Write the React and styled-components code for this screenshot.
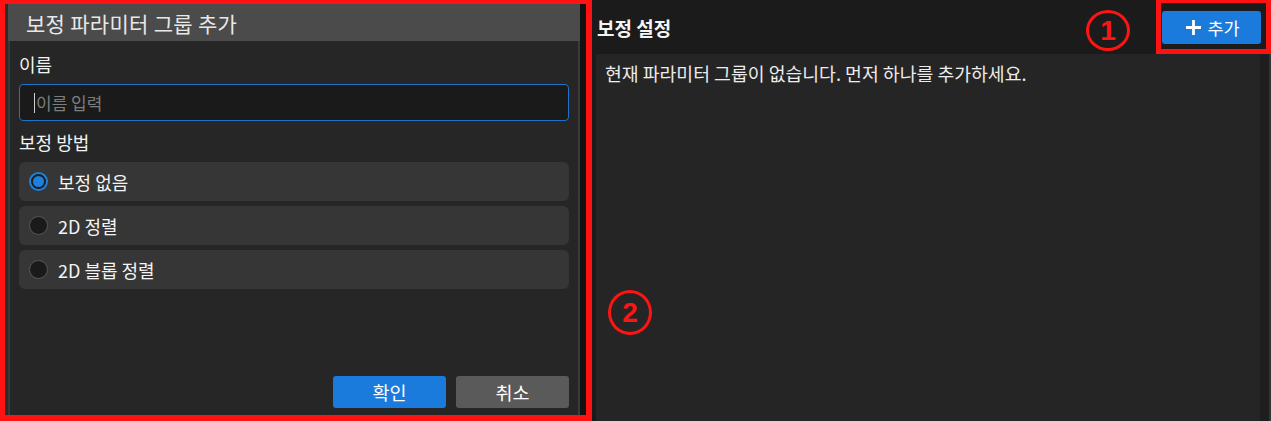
import React from "react";
import styled, { createGlobalStyle } from "styled-components";

const Global = createGlobalStyle`
  html, body { margin: 0; padding: 0; background: #1b1b1b; }
  body { font-family: "Noto Sans CJK KR", "Noto Sans", "Liberation Sans", sans-serif; }
  * { box-sizing: border-box; }
`;

const Page = styled.div`
  display: flex;
  width: 1271px;
  height: 421px;
  overflow: hidden;
`;

const LeftPane = styled.section`
  width: 592px;
  height: 421px;
  display: flex;
  border: 5px solid #ff1212;
  border-top-width: 4px;
  border-bottom-width: 6px;
  border-right-width: 6px;
  background: #121212;
`;

const Strip = styled.div`
  width: ${(p) => p.$w}px;
  flex: none;
  background: ${(p) => p.$c};
`;

const Dialog = styled.div`
  flex: 1;
  display: flex;
  flex-direction: column;
`;

const TitleBar = styled.div`
  height: 37px;
  flex: none;
  background: #4b4b4b;
  padding-left: 18px;
  display: flex;
  align-items: center;
  color: #e8e8e8;
  font-size: 21px;
  letter-spacing: 0.3px;
`;

const Body = styled.div`
  flex: 1;
  display: flex;
  flex-direction: column;
  background: #262626;
  border-left: 2px solid #3a3a3a;
  border-right: 2px solid #3a3a3a;
  padding: 0 9px 7px 9px;
`;

const Label = styled.div`
  margin-top: ${(p) => p.$mt}px;
  height: 20px;
  line-height: 20px;
  font-size: 18px;
  color: #f2f2f2;
`;

const InputBox = styled.div`
  margin-top: 10px;
  height: 37px;
  background: #1a1a1a;
  border: 1.5px solid #1f72c4;
  border-radius: 4px;
  display: flex;
  align-items: center;
  padding-left: 14px;
  font-size: 17px;
  color: #7d7d7d;
`;

const Caret = styled.span`
  display: inline-block;
  width: 1px;
  height: 20px;
  background: #cfcfcf;
  margin-right: 1px;
`;

const RadioList = styled.div`
  margin-top: 10px;
  display: flex;
  flex-direction: column;
  gap: 5px;
`;

const RadioRow = styled.div`
  height: 39px;
  background: #363636;
  border-radius: 6px;
  display: flex;
  align-items: center;
  padding-left: 10px;
  gap: 10px;
  font-size: 18px;
  color: #f4f4f4;
`;

const RadioDot = styled.span`
  width: 19px;
  height: 19px;
  border-radius: 50%;
  flex: none;
  background: ${(p) => (p.$on ? "#1d1d1d" : "#1a1a1a")};
  border: ${(p) => (p.$on ? "2px solid #1e80dc" : "1px solid #575757")};
  display: flex;
  align-items: center;
  justify-content: center;
  &::after {
    content: "";
    display: ${(p) => (p.$on ? "block" : "none")};
    width: 11px;
    height: 11px;
    border-radius: 50%;
    background: #1e80dc;
  }
`;

const Footer = styled.div`
  margin-top: auto;
  display: flex;
  justify-content: flex-end;
  gap: 10px;
`;

const DialogButton = styled.button`
  width: 113px;
  height: 32px;
  border: none;
  border-radius: 3px;
  background: ${(p) => (p.$primary ? "#1a7bdc" : "#5a5a5a")};
  color: #ffffff;
  font-family: inherit;
  font-size: 18.5px;
  line-height: 32px;
  padding: 0;
`;

const RightPane = styled.section`
  flex: 1;
  display: flex;
  flex-direction: column;
  background: #1b1b1b;
`;

const Header = styled.div`
  position: relative;
  height: 54px;
  flex: none;
  display: flex;
  align-items: center;
  justify-content: space-between;
  padding: 0 10px 0 5px;
`;

const HeaderTitle = styled.div`
  font-size: 19px;
  font-weight: 700;
  color: #f4f4f4;
`;

const AddButton = styled.button`
  width: 99px;
  height: 33px;
  border: none;
  border-radius: 3px;
  background: #1a7bdc;
  color: #fff;
  font-family: inherit;
  font-size: 17.5px;
  line-height: 33px;
  display: flex;
  align-items: center;
  justify-content: center;
  gap: 5px;
  padding: 0 0 0 2px;
  position: relative;
  z-index: 1;
`;

const HighlightBox = styled.div`
  position: absolute;
  right: 0;
  top: 0;
  width: 115px;
  height: 54px;
  border: 5px solid #ff1212;
  border-top-width: 3px;
  pointer-events: none;
  z-index: 2;
`;

const Marker = styled.div`
  position: absolute;
  ${(p) => p.$pos};
  width: ${(p) => p.$w}px;
  height: ${(p) => p.$h}px;
  border: 3.5px solid #ff1414;
  border-radius: 50%;
  display: flex;
  align-items: center;
  justify-content: center;
  color: #ff1414;
  font-family: "Liberation Sans", sans-serif;
  font-weight: 700;
  font-size: 28px;
  line-height: 1;
  pointer-events: none;
`;

const ContentRow = styled.div`
  flex: 1;
  display: flex;
  padding-left: 4px;
`;

const Panel = styled.div`
  position: relative;
  flex: 1;
  background: #252525;
  padding: 9px 9px;
  font-size: 18.3px;
  line-height: 20px;
  color: #ececec;
`;

const methods = [
  { label: "보정 없음", on: true },
  { label: "2D 정렬", on: false },
  { label: "2D 블롭 정렬", on: false },
];

function PlusIcon() {
  return (
    <svg width="17" height="17" viewBox="0 0 17 17" aria-hidden="true">
      <path d="M8.5 1v15M1 8.5h15" stroke="#fff" strokeWidth="2.8" strokeLinecap="butt" />
    </svg>
  );
}

export default function App() {
  return (
    <>
      <Global />
      <Page>
        <LeftPane>
          <Strip $w={3} $c="#2b2b2b" />
          <Dialog>
            <TitleBar>보정 파라미터 그룹 추가</TitleBar>
            <Body>
              <Label $mt={13}>이름</Label>
              <InputBox>
                <Caret />
                이름 입력
              </InputBox>
              <Label $mt={11}>보정 방법</Label>
              <RadioList>
                {methods.map((m) => (
                  <RadioRow key={m.label}>
                    <RadioDot $on={m.on} />
                    {m.label}
                  </RadioRow>
                ))}
              </RadioList>
              <Footer>
                <DialogButton $primary>확인</DialogButton>
                <DialogButton>취소</DialogButton>
              </Footer>
            </Body>
          </Dialog>
          <Strip $w={6} $c="#121212" />
        </LeftPane>
        <RightPane>
          <Header>
            <HeaderTitle>보정 설정</HeaderTitle>
            <Marker $pos="right: 141px; top: 10px;" $w={44} $h={41}>1</Marker>
            <AddButton>
              <PlusIcon />
              추가
            </AddButton>
            <HighlightBox />
          </Header>
          <ContentRow>
            <Panel>
              현재 파라미터 그룹이 없습니다. 먼저 하나를 추가하세요.
              <Marker $pos="left: 12px; top: 236px;" $w={44} $h={45}>2</Marker>
            </Panel>
            <Strip $w={9} $c="#1e1e1e" />
            <Strip $w={2} $c="#333333" />
          </ContentRow>
        </RightPane>
      </Page>
    </>
  );
}
